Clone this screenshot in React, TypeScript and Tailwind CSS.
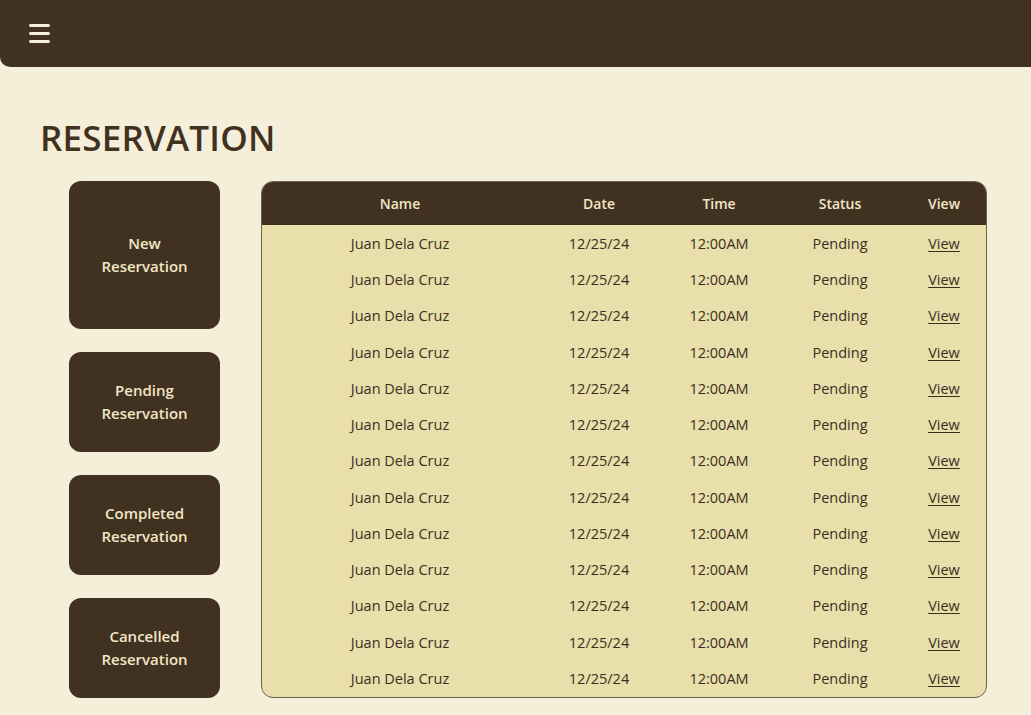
import React from 'react';

const rows = Array.from({ length: 13 }, () => ({
  name: 'Juan Dela Cruz',
  date: '12/25/24',
  time: '12:00AM',
  status: 'Pending',
}));

const menu = [
  { label: 'New Reservation', tall: true },
  { label: 'Pending Reservation' },
  { label: 'Completed Reservation' },
  { label: 'Cancelled Reservation' },
];

export default function App() {
  return (
    <div
      className="min-h-[715px] bg-[#f5efd9] text-[#3b2e1f]"
      style={{ fontFamily: '"Open Sans", "Liberation Sans", sans-serif' }}
    >
      {/* top bar */}
      <header className="h-[67px] bg-[#413120] rounded-bl-[10px] flex items-center pl-[29px]">
        <button className="flex flex-col gap-[5px]" aria-label="Menu">
          <span className="block w-[21px] h-[3px] rounded-full bg-[#f7f0d8]" />
          <span className="block w-[21px] h-[3px] rounded-full bg-[#f7f0d8]" />
          <span className="block w-[21px] h-[3px] rounded-full bg-[#f7f0d8]" />
        </button>
      </header>

      <main className="pl-[40px] pr-[44px] pt-[50px]">
        <h1 className="text-[35px] leading-[42px] font-semibold tracking-[0.2px] text-[#413120]">
          RESERVATION
        </h1>

        <div className="flex mt-[22px] gap-[41px] pl-[29px]">
          {/* side buttons */}
          <div className="flex flex-col gap-[23px] w-[151px] shrink-0">
            {menu.map((m) => (
              <button
                key={m.label}
                className={`${m.tall ? 'h-[148px]' : 'h-[100px]'} rounded-[12px] bg-[#413120] text-[#f1e7c6] text-[15px] leading-[23px] font-semibold px-6`}
              >
                {m.label}
              </button>
            ))}
          </div>

          {/* table */}
          <div className="w-[726px] rounded-[12px] overflow-hidden border border-[#6b6250] bg-[#e8dfab] h-[517px]">
            <table className="w-full border-collapse">
              <thead>
                <tr className="bg-[#413120] text-[#f1e7c6] text-[14px] font-semibold h-[43px]">
                  <th className="w-[276px] font-semibold">Name</th>
                  <th className="w-[122px] font-semibold">Date</th>
                  <th className="w-[118px] font-semibold">Time</th>
                  <th className="w-[124px] font-semibold">Status</th>
                  <th className="font-semibold">View</th>
                </tr>
              </thead>
              <tbody className="text-[14.5px] text-[#3b2e1f]">
                {rows.map((r, i) => (
                  <tr key={i} className="h-[36.25px] text-center">
                    <td className="pt-px">{r.name}</td>
                    <td className="pt-px">{r.date}</td>
                    <td className="pt-px">{r.time}</td>
                    <td className="pt-px">{r.status}</td>
                    <td className="pt-px">
                      <a href="#" className="underline underline-offset-2">
                        View
                      </a>
                    </td>
                  </tr>
                ))}
              </tbody>
            </table>
          </div>
        </div>
      </main>
    </div>
  );
}
